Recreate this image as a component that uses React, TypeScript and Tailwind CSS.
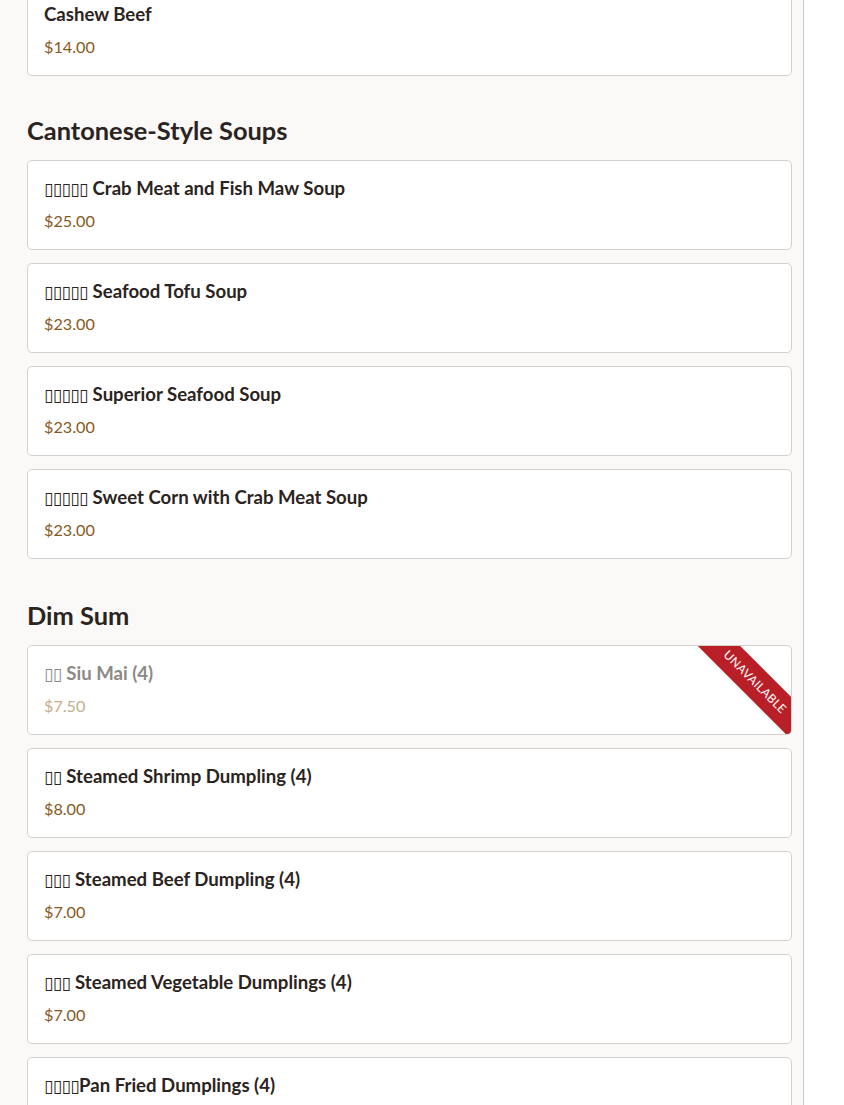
import React from "react";

type Item = { zh: string; name: string; price: string; unavailable?: boolean; tight?: boolean };
type Section = { title?: string; items: Item[] };

const sections: Section[] = [
  { items: [{ zh: "", name: "Cashew Beef", price: "$14.00" }] },
  {
    title: "Cantonese-Style Soups",
    items: [
      { zh: "▯▯▯▯▯", name: "Crab Meat and Fish Maw Soup", price: "$25.00" },
      { zh: "▯▯▯▯▯", name: "Seafood Tofu Soup", price: "$23.00" },
      { zh: "▯▯▯▯▯", name: "Superior Seafood Soup", price: "$23.00" },
      { zh: "▯▯▯▯▯", name: "Sweet Corn with Crab Meat Soup", price: "$23.00" },
    ],
  },
  {
    title: "Dim Sum",
    items: [
      { zh: "▯▯", name: "Siu Mai (4)", price: "$7.50", unavailable: true },
      { zh: "▯▯", name: "Steamed Shrimp Dumpling (4)", price: "$8.00" },
      { zh: "▯▯▯", name: "Steamed Beef Dumpling (4)", price: "$7.00" },
      { zh: "▯▯▯", name: "Steamed Vegetable Dumplings (4)", price: "$7.00" },
      { zh: "▯▯▯▯", name: "Pan Fried Dumplings (4)", price: "$7.00", tight: true },
    ],
  },
];

function MenuCard({ item }: { item: Item }) {
  return (
    <div className="relative overflow-hidden rounded-[5px] border border-[#d4d1cd] bg-white px-4 pt-[15px] pb-[17px]">
      <div
        className={`h-[24px] text-[18.6px] leading-[24px] font-bold ${
          item.unavailable ? "text-[#8c8885]" : "text-[#2b2320]"
        }`}
      >
        {item.zh && (
          <span className="font-['DejaVu_Sans',sans-serif] text-[17px] leading-none font-normal tracking-[-0.6px]">
            {item.zh}
            {!item.tight && " "}
          </span>
        )}
        {item.name}
      </div>
      <div
        className={`mt-[10px] text-[16.2px] leading-[22px] ${
          item.unavailable ? "text-[#c4ae8b]" : "text-[#87591c]"
        }`}
      >
        {item.price}
      </div>
      {item.unavailable && (
        <div className="absolute top-0 right-0 h-[100px] w-[100px] overflow-hidden">
          <div className="absolute top-[21px] right-[-44px] flex h-[30px] w-[160px] rotate-45 items-center justify-center bg-[#b91f27] text-[12px] tracking-[0.3px] text-white">
            UNAVAILABLE
          </div>
        </div>
      )}
    </div>
  );
}

export default function App() {
  return (
    <div className="flex min-h-screen bg-white font-['Lato',sans-serif]">
      <main className="mt-[-14px] w-[804px] shrink-0 border-r border-[#c9c7c4] bg-[#faf9f7] pr-[11px] pb-10 pl-[27px]">
        {sections.map((s, i) => (
          <section key={i} className={!s.title ? "" : i === 1 ? "mt-[38px]" : "mt-[40px]"}>
            {s.title && (
              <h2 className="mb-[14px] text-[25.4px] leading-[32px] font-bold text-[#2b2320]">{s.title}</h2>
            )}
            <div className="flex flex-col gap-[13px]">
              {s.items.map((it) => (
                <MenuCard key={it.name} item={it} />
              ))}
            </div>
          </section>
        ))}
      </main>
      <aside className="flex-1" />
    </div>
  );
}
